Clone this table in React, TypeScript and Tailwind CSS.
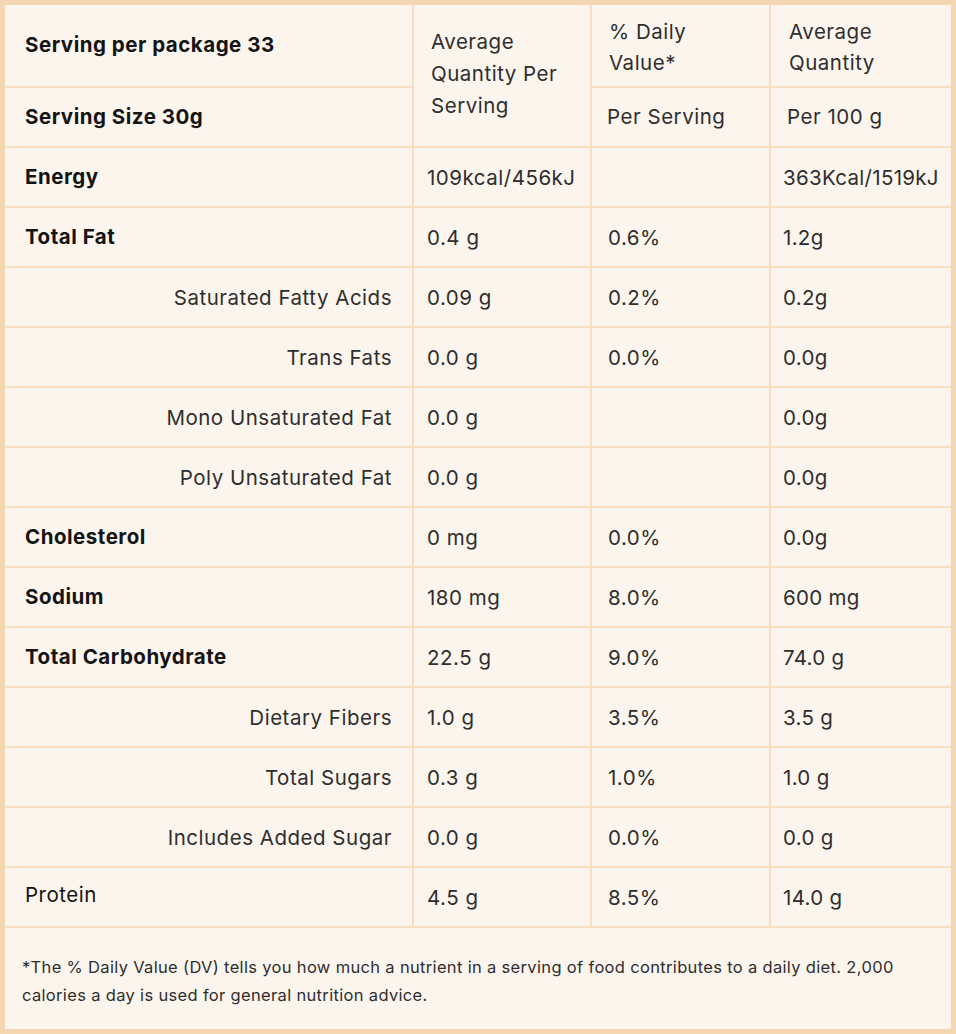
import React from 'react';

type Row = {
    label: string;
    kind: 'main' | 'sub' | 'plain';
    perServing: string;
    dv: string;
    per100: string;
};

const rows: Row[] = [
    { label: 'Energy', kind: 'main', perServing: '109kcal/456kJ', dv: '', per100: '363Kcal/1519kJ' },
    { label: 'Total Fat', kind: 'main', perServing: '0.4 g', dv: '0.6%', per100: '1.2g' },
    { label: 'Saturated Fatty Acids', kind: 'sub', perServing: '0.09 g', dv: '0.2%', per100: '0.2g' },
    { label: 'Trans Fats', kind: 'sub', perServing: '0.0 g', dv: '0.0%', per100: '0.0g' },
    { label: 'Mono Unsaturated Fat', kind: 'sub', perServing: '0.0 g', dv: '', per100: '0.0g' },
    { label: 'Poly Unsaturated Fat', kind: 'sub', perServing: '0.0 g', dv: '', per100: '0.0g' },
    { label: 'Cholesterol', kind: 'main', perServing: '0 mg', dv: '0.0%', per100: '0.0g' },
    { label: 'Sodium', kind: 'main', perServing: '180 mg', dv: '8.0%', per100: '600 mg' },
    { label: 'Total Carbohydrate', kind: 'main', perServing: '22.5 g', dv: '9.0%', per100: '74.0 g' },
    { label: 'Dietary Fibers', kind: 'sub', perServing: '1.0 g', dv: '3.5%', per100: '3.5 g' },
    { label: 'Total Sugars', kind: 'sub', perServing: '0.3 g', dv: '1.0%', per100: '1.0 g' },
    { label: 'Includes Added Sugar', kind: 'sub', perServing: '0.0 g', dv: '0.0%', per100: '0.0 g' },
    { label: 'Protein', kind: 'plain', perServing: '4.5 g', dv: '8.5%', per100: '14.0 g' },
];

const cell = 'bg-[#fcf5ee] flex items-center';

export default function App() {
    return (
        <div
            className="w-[956px] min-h-screen bg-[#fcf5ee] text-[20.5px] tracking-[0.025em] text-[#2e2e2e]"
            style={{ fontFamily: 'Inter, "Noto Sans", sans-serif' }}
        >
            <div className="border-[5px] border-[#f5d6b3] bg-[#f8dfc4]">
                <div className="grid grid-cols-[407px_176px_177px_180px] grid-rows-[81px_58px] gap-[2px]">
                    <div className={`${cell} pl-5 font-bold text-[#141414]`}>Serving per package 33</div>
                    <div className="bg-[#fcf5ee] row-span-2 pl-[17px] pr-3 pt-[21px] leading-[32px]">
                        Average Quantity Per Serving
                    </div>
                    <div className="bg-[#fcf5ee] pl-[17px] pt-[11px] leading-[31px]">
                        % Daily
                        <br />
                        Value*
                    </div>
                    <div className="bg-[#fcf5ee] pl-[18px] pt-[11px] leading-[31px]">
                        Average
                        <br />
                        Quantity
                    </div>
                    <div className={`${cell} pl-5 font-bold text-[#141414]`}>Serving Size 30g</div>
                    <div className={`${cell} pl-[15px]`}>Per Serving</div>
                    <div className={`${cell} pl-[16px]`}>Per 100 g</div>
                </div>

                <div className="grid grid-cols-[407px_176px_177px_180px] auto-rows-[58px] gap-[2px] mt-[2px]">
                    {rows.map((r) => (
                        <React.Fragment key={r.label}>
                            <div
                                className={`${cell} ${
                                    r.kind === 'sub'
                                        ? 'justify-end pr-5 pt-[2px]'
                                        : r.kind === 'main'
                                          ? 'pl-5 font-bold text-[#141414]'
                                          : 'pl-5 text-[#141414]'
                                }`}
                            >
                                <span className={r.kind === 'plain' ? '-translate-y-[2px]' : ''}>{r.label}</span>
                            </div>
                            <div className={`${cell} pl-[13px] pt-[2px]`}>{r.perServing}</div>
                            <div className={`${cell} pl-[16px] pt-[2px]`}>{r.dv}</div>
                            <div className={`${cell} pl-[12px] pt-[2px] tracking-[0.015em]`}>{r.per100}</div>
                        </React.Fragment>
                    ))}
                </div>

                <div className="mt-[2px] h-[101px] bg-[#fcf5ee] flex items-center pl-[17px] pr-6">
                    <p className="text-[16.5px] tracking-[0.02em] leading-[28px] text-[#2e2e2e] translate-y-[2px]">
                        *The % Daily Value (DV) tells you how much a nutrient in a serving of food contributes to a daily diet. 2,000
                        <br />
                        calories a day is used for general nutrition advice.
                    </p>
                </div>
            </div>
        </div>
    );
}
